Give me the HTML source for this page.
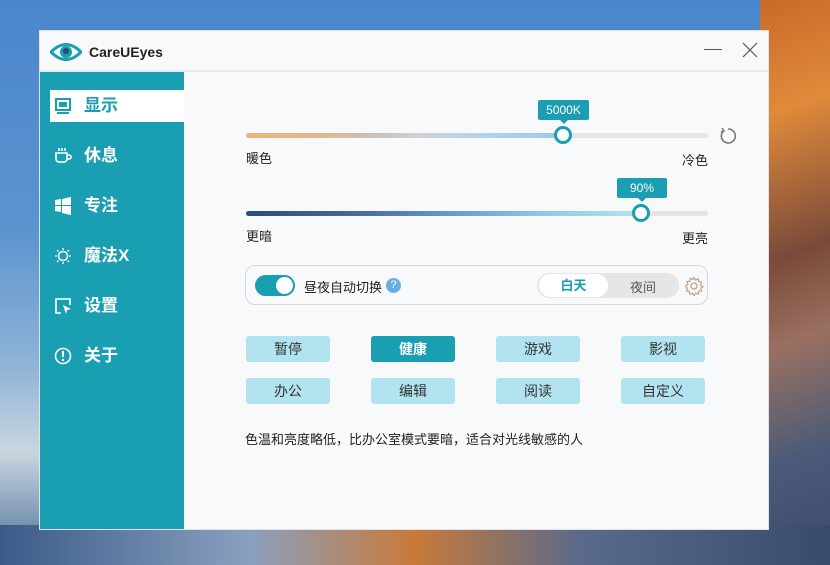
<!DOCTYPE html>
<html><head><meta charset="utf-8"><style>
*{margin:0;padding:0;box-sizing:border-box}
body{width:830px;height:565px;overflow:hidden;position:relative;font-family:"Liberation Sans","Noto Sans CJK SC",sans-serif;
background:linear-gradient(180deg,#4a86cc 0%,#5a93cf 40%,#8fb4d6 65%,#c9d6e0 80%,#4a6b95 100%);}
.rt{position:absolute;left:760px;top:0;width:70px;height:565px;background:linear-gradient(160deg,#c86a2a 0%,#e08a3a 20%,#7a4a3a 45%,#9a7060 60%,#4a5a78 80%,#3a4a68 100%)}
.bt{position:absolute;left:0;top:525px;width:830px;height:40px;background:linear-gradient(90deg,#3a5a88,#8aa0c0 30%,#c87a3a 50%,#5a6a8a 70%,#3a4a6a)}
.win{position:absolute;left:40px;top:31px;width:728px;height:498px;background:#f7f9fb;box-shadow:0 0 0 1px #dfe3e8}
.title{position:absolute;left:0;top:0;width:100%;height:41px;background:#f7f9fb;border-bottom:2px solid #e6e8ea}
.title .n{position:absolute;left:49px;top:13px;font-weight:bold;font-size:14px;color:#222}
.side{position:absolute;left:0;top:41px;width:144px;height:457px;background:#1a9eb1}
.it{position:absolute;left:10px;width:134px;height:32px;color:#fff;font-size:17px;font-weight:bold;line-height:32px;padding-left:34px}
.it.on{background:#fff;color:#1a9eb1}
.ic{position:absolute;left:4px;top:7px;width:18px;height:18px}
.trk{position:absolute;height:5px;border-radius:3px;background:#e3e5e7}
.lbl{position:absolute;font-size:13px;color:#222}
.tip{position:absolute;background:#1a9eb1;color:#fff;font-size:12px;height:20px;line-height:20px;text-align:center;border-radius:2px}
.tip:after{content:"";position:absolute;left:50%;bottom:-4px;margin-left:-4px;border:4px solid transparent;border-bottom:0;border-top-color:#1a9eb1}
.knob{position:absolute;width:18px;height:18px;border-radius:50%;background:#fff;border:3px solid #1a9eb1}
.btn{position:absolute;width:84px;height:26px;background:#b1e4f0;border-radius:3px;text-align:center;line-height:26px;font-size:14px;color:#333}
.btn.on{background:#1a9eb1;color:#fff;font-weight:bold}
</style></head><body>
<div class="rt"></div><div class="bt"></div>
<div class="win">
<div class="title">
<svg style="position:absolute;left:10px;top:10px" width="32" height="22" viewBox="0 0 32 22"><path d="M1 11 Q16 -4 31 11 Q16 26 1 11Z" fill="none" stroke="#1a9eb1" stroke-width="3"/><circle cx="16" cy="11" r="6" fill="#1a9eb1"/><circle cx="16" cy="10" r="3" fill="#2a4a6a"/></svg>
<div class="n">CareUEyes</div>
<div style="position:absolute;left:664px;top:18px;width:18px;height:1px;background:#555"></div>
<svg style="position:absolute;left:702px;top:11px" width="16" height="16"><path d="M1 1L15 15M15 1L1 15" stroke="#555" stroke-width="1.2"/></svg>
</div>
<div class="side">
<div class="it on" style="top:18px"><svg class="ic" viewBox="0 0 18 18"><rect x="2" y="2" width="14" height="11" fill="none" stroke="#1a9eb1" stroke-width="2"/><rect x="5" y="5" width="8" height="5" fill="#1a9eb1"/><path d="M3 16h12" stroke="#1a9eb1" stroke-width="2"/></svg>显示</div>
<div class="it" style="top:68px"><svg class="ic" viewBox="0 0 18 18"><path d="M2 6h11v6a3 3 0 0 1-3 3H5a3 3 0 0 1-3-3zM13 8h2a2 2 0 0 1 0 4h-2M5 1v3M8 1v3M11 1v3" fill="none" stroke="#fff" stroke-width="1.6"/></svg>休息</div>
<div class="it" style="top:118px"><svg class="ic" viewBox="0 0 18 18"><path d="M1 3l6-1v6H1zM8 2l9-2v8H8zM1 9h6v6l-6-1zM8 9h9v9l-9-2z" fill="#fff"/></svg>专注</div>
<div class="it" style="top:168px"><svg class="ic" viewBox="0 0 18 18"><circle cx="9" cy="9" r="4.5" fill="none" stroke="#fff" stroke-width="1.5"/><path d="M9 1v2M9 15v2M1 9h2M15 9h2M3 3l1.5 1.5M13.5 13.5L15 15M3 15l1.5-1.5M13.5 4.5L15 3" stroke="#fff" stroke-width="1.3"/></svg>魔法X</div>
<div class="it" style="top:218px"><svg class="ic" viewBox="0 0 18 18"><path d="M7 16H2V2h14v6" fill="none" stroke="#fff" stroke-width="1.6"/><path d="M9 8l8 4-4 1-1 4z" fill="#fff"/></svg>设置</div>
<div class="it" style="top:268px"><svg class="ic" viewBox="0 0 18 18"><circle cx="9" cy="9" r="7.5" fill="none" stroke="#fff" stroke-width="1.6"/><path d="M9 4v6" stroke="#fff" stroke-width="2"/><circle cx="9" cy="13" r="1.2" fill="#fff"/></svg>关于</div>
</div>
<div class="trk" style="left:206px;top:102px;width:462px"></div>
<div class="trk" style="left:206px;top:102px;width:317px;background:linear-gradient(90deg,#efb37a 0%,#e0b894 25%,#c8c0ba 40%,#d0d2d4 55%,#b1d2ee 75%,#9bc8ec 100%)"></div>
<div class="knob" style="left:514px;top:95px"></div>
<div class="tip" style="left:498px;top:69px;width:51px">5000K</div>
<svg style="position:absolute;left:679px;top:96px" width="18" height="18" viewBox="0 0 18 18"><path d="M5 3.5A7 7 0 1 0 9 2" fill="none" stroke="#777" stroke-width="1.6"/><path d="M3 1l2 3-3 1" fill="none" stroke="#777" stroke-width="1.5"/></svg>
<div class="lbl" style="left:206px;top:117px">暖色</div>
<div class="lbl" style="left:642px;top:119px">冷色</div>
<div class="trk" style="left:206px;top:180px;width:462px"></div>
<div class="trk" style="left:206px;top:180px;width:395px;background:linear-gradient(90deg,#2c4a78 0%,#4b6d9a 30%,#6aa0d4 55%,#93c6e8 75%,#b5e3ef 100%)"></div>
<div class="knob" style="left:592px;top:173px"></div>
<div class="tip" style="left:577px;top:147px;width:50px">90%</div>
<div class="lbl" style="left:206px;top:195px">更暗</div>
<div class="lbl" style="left:642px;top:197px">更亮</div>
<div style="position:absolute;left:205px;top:234px;width:463px;height:40px;border:1px solid #d6d9dc;border-radius:10px;background:#f7f9fb"></div>
<div style="position:absolute;left:215px;top:244px;width:40px;height:21px;border-radius:11px;background:#1a9eb1"></div>
<div style="position:absolute;left:236px;top:246px;width:17px;height:17px;border-radius:50%;background:#fff"></div>
<div class="lbl" style="left:264px;top:246px">昼夜自动切换</div>
<div style="position:absolute;left:346px;top:247px;width:15px;height:15px;border-radius:50%;background:#6aaee0;color:#fff;font-size:11px;text-align:center;line-height:15px">?</div>
<div style="position:absolute;left:497px;top:242px;width:142px;height:25px;border-radius:13px;background:#e4e6e8"></div>
<div style="position:absolute;left:499px;top:243px;width:69px;height:23px;border-radius:12px;background:#fff;color:#1a9eb1;font-weight:bold;font-size:13px;text-align:center;line-height:23px">白天</div>
<div class="lbl" style="left:590px;top:246px;color:#555">夜间</div>
<svg style="position:absolute;left:644px;top:245px" width="20" height="20" viewBox="0 0 20 20"><circle cx="10" cy="10" r="3" fill="none" stroke="#c8a080" stroke-width="1.3"/><path d="M10 1.5l1.5 2.5 2.8-1 .4 2.9 2.9.4-1 2.8 2.5 1.5-2.5 1.5 1 2.8-2.9.4-.4 2.9-2.8-1-1.5 2.5-1.5-2.5-2.8 1-.4-2.9-2.9-.4 1-2.8L1.5 10 4 8.5l-1-2.8 2.9-.4.4-2.9 2.8 1z" fill="none" stroke="#c8a080" stroke-width="1.2"/></svg>
<div class="btn" style="left:206px;top:305px">暂停</div>
<div class="btn on" style="left:331px;top:305px">健康</div>
<div class="btn" style="left:456px;top:305px">游戏</div>
<div class="btn" style="left:581px;top:305px">影视</div>
<div class="btn" style="left:206px;top:347px">办公</div>
<div class="btn" style="left:331px;top:347px">编辑</div>
<div class="btn" style="left:456px;top:347px">阅读</div>
<div class="btn" style="left:581px;top:347px">自定义</div>
<div class="lbl" style="left:205px;top:398px">色温和亮度略低，比办公室模式要暗，适合对光线敏感的人</div>
</div>
</body></html>
